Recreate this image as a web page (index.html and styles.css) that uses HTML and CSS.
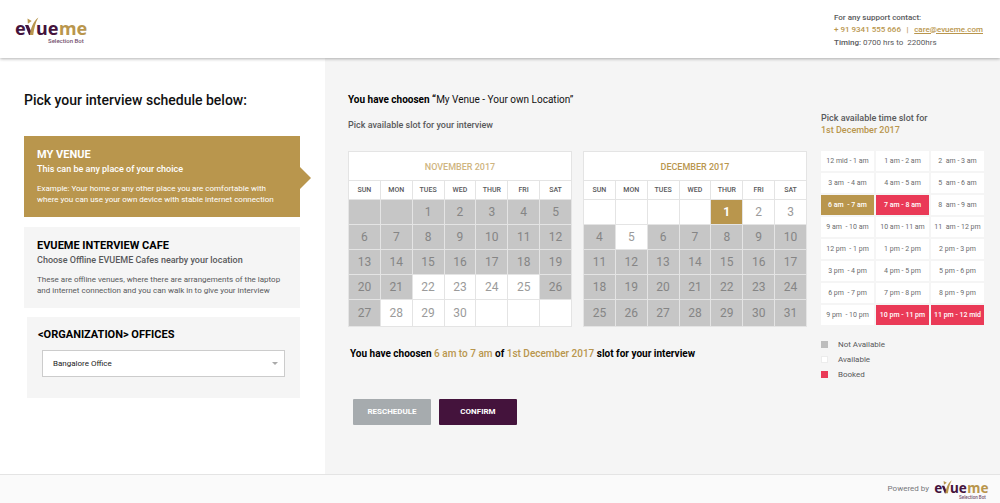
FILE: index.html
```html
<!DOCTYPE html>
<html lang="en">
<head>
<meta charset="utf-8">
<meta name="viewport" content="width=device-width, initial-scale=1">
<title>Evueme – Interview schedule</title>
<link rel="stylesheet" href="styles.css">
</head>
<body>
<header class="topbar">
  <svg class="logo" viewBox="0 0 74 28" role="img" aria-label="evueme Selection Bot">
    <text class="logo-word logo-plum" x="0" y="19">e</text>
    <path class="logo-plum" d="M10 9h3.400l3.200 7.500-1 2.500h-1.600z"/>
    <path class="logo-gold" d="M14.800 19c1-7 3.200-13.500 8.600-17.500-3 5-4.200 10.500-5.200 17.500z"/>
    <path class="logo-gold" d="M12.500 2.500l4.200 2.400-3.800 2.800z"/>
    <text class="logo-word logo-plum" x="21" y="19">ue</text>
    <text class="logo-word logo-gold" x="44" y="19">me</text>
    <text class="logo-tag" x="33" y="27">Selection Bot</text>
  </svg>
  <address class="support">
    <strong>For any support contact:</strong>
    <span class="support-line"><span>+ 91 9341 555 666</span><span>|</span><a href="mailto:care@evueme.com">care@evueme.com</a></span>
    <span class="timing"><strong>Timing:</strong> 0700 hrs to&nbsp; 2200hrs</span>
  </address>
</header>

<div class="page">
  <aside class="venues">
    <h1 class="venues-title">Pick your interview schedule below:</h1>
    <section class="venue venue-active">
      <h2 class="venue-name">MY VENUE</h2>
      <p class="venue-lead">This can be any place of your choice</p>
      <p class="venue-text">Example: Your home or any other place you are comfortable with<br>where you can use your own device with stable internet connection</p>
    </section>
    <section class="venue">
      <h2 class="venue-name">EVUEME INTERVIEW CAFE</h2>
      <p class="venue-lead">Choose Offline EVUEME Cafes nearby your location</p>
      <p class="venue-text">These are offline venues, where there are arrangements of the laptop<br>and internet connection and you can walk in to give your interview</p>
    </section>
    <section class="venue venue-office">
      <h2 class="venue-name"><label for="office">&lt;ORGANIZATION&gt; OFFICES</label></h2>
      <div class="select-wrap">
        <select id="office" class="office-select"><option>Bangalore Office</option></select>
      </div>
    </section>
  </aside>

  <main class="schedule">
    <div class="dates">
      <h2 class="chosen-venue"><strong>You have choosen “</strong>My Venue - Your own Location”</h2>
      <p class="hint">Pick available slot for your interview</p>
      <div class="calendars">
        <table class="calendar">
          <caption class="month month-muted">NOVEMBER 2017</caption>
          <thead><tr><th>SUN</th><th>MON</th><th>TUES</th><th>WED</th><th>THUR</th><th>FRI</th><th>SAT</th></tr></thead>
          <tbody>
            <tr><td class="off"></td><td class="off"></td><td class="off">1</td><td class="off">2</td><td class="off">3</td><td class="off">4</td><td class="off">5</td></tr>
            <tr><td class="off">6</td><td class="off">7</td><td class="off">8</td><td class="off">9</td><td class="off">10</td><td class="off">11</td><td class="off">12</td></tr>
            <tr><td class="off">13</td><td class="off">14</td><td class="off">15</td><td class="off">16</td><td class="off">17</td><td class="off">18</td><td class="off">19</td></tr>
            <tr><td class="off">20</td><td class="off">21</td><td><button class="day">22</button></td><td><button class="day">23</button></td><td><button class="day">24</button></td><td><button class="day">25</button></td><td class="off">26</td></tr>
            <tr><td class="off">27</td><td><button class="day">28</button></td><td><button class="day">29</button></td><td><button class="day">30</button></td><td></td><td></td><td></td></tr>
          </tbody>
        </table>
        <table class="calendar">
          <caption class="month">DECEMBER 2017</caption>
          <thead><tr><th>SUN</th><th>MON</th><th>TUES</th><th>WED</th><th>THUR</th><th>FRI</th><th>SAT</th></tr></thead>
          <tbody>
            <tr><td></td><td></td><td></td><td></td><td class="picked"><button class="day" aria-pressed="true">1</button></td><td><button class="day">2</button></td><td><button class="day">3</button></td></tr>
            <tr><td class="off">4</td><td><button class="day">5</button></td><td class="off">6</td><td class="off">7</td><td class="off">8</td><td class="off">9</td><td class="off">10</td></tr>
            <tr><td class="off">11</td><td class="off">12</td><td class="off">13</td><td class="off">14</td><td class="off">15</td><td class="off">16</td><td class="off">17</td></tr>
            <tr><td class="off">18</td><td class="off">19</td><td class="off">20</td><td class="off">21</td><td class="off">22</td><td class="off">23</td><td class="off">24</td></tr>
            <tr><td class="off">25</td><td class="off">26</td><td class="off">27</td><td class="off">28</td><td class="off">29</td><td class="off">30</td><td class="off">31</td></tr>
          </tbody>
        </table>
      </div>
      <p class="summary">You have choosen <span class="accent">6 am to 7 am</span> of <span class="accent">1st December 2017</span> slot for your interview</p>
      <div class="actions">
        <button class="action action-muted">RESCHEDULE</button>
        <button class="action">CONFIRM</button>
      </div>
    </div>

    <section class="times">
      <h2 class="times-title">Pick available time slot for <span class="accent">1st December 2017</span></h2>
      <div class="slots">
        <button class="slot">12 mid - 1 am</button><button class="slot">1 am - 2 am</button><button class="slot">2&nbsp; am - 3 am</button>
        <button class="slot">3 am&nbsp; - 4 am</button><button class="slot">4 am - 5 am</button><button class="slot">5&nbsp; am - 6 am</button>
        <button class="slot slot-picked">6 am&nbsp; - 7 am</button><button class="slot slot-booked">7 am - 8 am</button><button class="slot">8&nbsp; am - 9 am</button>
        <button class="slot">9 am&nbsp; - 10 am</button><button class="slot">10 am - 11 am</button><button class="slot">11&nbsp; am - 12 pm</button>
        <button class="slot">12 pm&nbsp; - 1 pm</button><button class="slot">1 pm - 2 pm</button><button class="slot">2 pm - 3 pm</button>
        <button class="slot">3 pm&nbsp; - 4 pm</button><button class="slot">4 pm - 5 pm</button><button class="slot">5 pm - 6 pm</button>
        <button class="slot">6 pm&nbsp; - 7 pm</button><button class="slot">7 pm - 8 pm</button><button class="slot">8 pm - 9 pm</button>
        <button class="slot">9 pm&nbsp; - 10 pm</button><button class="slot slot-booked">10 pm - 11 pm</button><button class="slot slot-booked">11 pm - 12 mid</button>
      </div>
      <ul class="legend">
        <li class="legend-item legend-off">Not Available</li>
        <li class="legend-item">Available</li>
        <li class="legend-item legend-booked">Booked</li>
      </ul>
    </section>
  </main>
</div>

<footer class="footer">
  <span>Powered by</span>
  <svg class="logo logo-small" viewBox="0 0 74 28" role="img" aria-label="evueme Selection Bot">
    <text class="logo-word logo-plum" x="0" y="19">e</text>
    <path class="logo-plum" d="M10 9h3.400l3.200 7.500-1 2.500h-1.600z"/>
    <path class="logo-gold" d="M14.800 19c1-7 3.200-13.500 8.600-17.500-3 5-4.200 10.500-5.200 17.500z"/>
    <path class="logo-gold" d="M12.500 2.500l4.200 2.400-3.800 2.800z"/>
    <text class="logo-word logo-plum" x="21" y="19">ue</text>
    <text class="logo-word logo-gold" x="44" y="19">me</text>
    <text class="logo-tag" x="33" y="27">Selection Bot</text>
  </svg>
</footer>
</body>
</html>
```
FILE: styles.css
```css
:root {
  --gold: #b9964d;
  --plum: #44133c;
  --red: #ea3a57;
  --grey: #c6c6c6;
  --panel: #f5f5f5;
  --line: #e4e4e4;
  --text: #58595b;
}

* { box-sizing: border-box; }

body {
  margin: 0;
  min-height: 100vh;
  display: flex;
  flex-direction: column;
  background: #fff;
  color: var(--text);
  font: 8px/12px Roboto, "Liberation Sans", sans-serif;
}

h1, h2, p, ul { margin: 0; padding: 0; }

button, select { font: inherit; color: inherit; border: 0; padding: 0; cursor: pointer; }

strong { font-weight: 500; }

.accent { color: var(--gold); }

/* Header */
.topbar {
  display: flex;
  justify-content: space-between;
  align-items: flex-start;
  padding: 12px 17px 9px 15px;
  min-height: 58px;
  background: #fff;
  box-shadow: 0 1px 3px rgba(0, 0, 0, .3);
  position: relative;
}

.logo { width: 74px; height: 28px; margin-top: 4px; overflow: visible; }
.logo-word { font: 700 18px "Noto Sans", sans-serif; }
.logo-plum { fill: var(--plum); }
.logo-gold { fill: var(--gold); }
.logo-tag { font: 500 6px Roboto, sans-serif; fill: #74506d; }

.support {
  display: flex;
  flex-direction: column;
  width: 149px;
  font-style: normal;
  line-height: 12px;
}
.support-line { display: flex; justify-content: space-between; color: var(--gold); font-weight: 500; }
.support-line a { color: inherit; }
.timing { margin-top: 1px; }

/* Page columns */
.page { flex: 1; display: flex; }

.venues {
  flex: 0 0 325px;
  padding: 34px 25px 24px 24px;
}
.venues-title { font-size: 14px; line-height: 16px; font-weight: 500; color: #111; margin-bottom: 28px; }

.venue {
  position: relative;
  min-height: 81px;
  margin-bottom: 9px;
  padding: 12px 13px 11px;
  background: var(--panel);
}
.venue-name { font-size: 11px; line-height: 14px; font-weight: 700; color: #000; }
.venue-lead { font-size: 9px; line-height: 14px; font-weight: 500; }
.venue-text { margin-top: 7px; line-height: 11px; white-space: nowrap; }

.venue-active { margin-bottom: 10px; background: var(--gold); color: #fff; }
.venue-active .venue-name { color: #fff; }
.venue-active::after {
  content: "";
  position: absolute;
  left: 100%;
  top: 31px;
  border: 11px solid transparent;
  border-left-color: var(--gold);
  border-right: 0;
}

.venue-office { margin-left: 3px; padding: 11px; }
.select-wrap { position: relative; margin: 8px 4px 0; }
.select-wrap::after {
  content: "";
  position: absolute;
  right: 7px;
  top: 12px;
  border: 3px solid transparent;
  border-top-color: #aaa;
  border-bottom: 0;
  pointer-events: none;
}
.office-select {
  appearance: none;
  display: block;
  width: 100%;
  height: 27px;
  padding: 0 10px;
  border: 1px solid #ccc;
  background: #fff;
  color: #222;
}

.schedule {
  flex: 1;
  display: grid;
  grid-template-columns: 1fr 163px;
  gap: 14px;
  align-items: start;
  padding: 34px 16px 24px 23px;
  background: var(--panel);
}
.chosen-venue { font-size: 10px; line-height: 16px; font-weight: 400; color: #111; }
.chosen-venue strong { font-weight: 700; color: #000; }
.hint { margin-top: 10px; font-size: 9px; line-height: 14px; font-weight: 500; }

/* Calendars */
.calendars { display: grid; grid-template-columns: 1fr 1fr; gap: 11px; margin-top: 19px; }
.calendar {
  width: 100%;
  table-layout: fixed;
  border-collapse: collapse;
  background: #fff;
  text-align: center;
}
.month {
  height: 29px;
  line-height: 30px;
  font-size: 9px;
  font-weight: 500;
  color: var(--gold);
  background: #fff;
  border: 1px solid var(--line);
  border-bottom: 0;
}
.month-muted { color: #cfb57f; }
.calendar th, .calendar td { border: 1px solid var(--line); padding: 0; }
.calendar th { height: 19px; font-size: 7px; line-height: 12px; font-weight: 500; }
.calendar td { height: 25px; font-size: 12px; line-height: 16px; color: #9b9b9b; }
.calendar tr:last-child td { height: 27px; }
.calendar .off { background: var(--grey); color: #858585; }
.calendar .picked { background: var(--gold); color: #fff; font-weight: 700; }
.day { display: block; width: 100%; background: none; }

.summary { margin-top: 20px; padding-left: 2px; font-size: 10px; line-height: 14px; font-weight: 700; color: #000; }
.summary .accent { font-weight: 500; }

.actions { display: flex; gap: 8px; margin-top: 38px; padding-left: 5px; }
.action {
  width: 78px;
  height: 26px;
  border-radius: 1px;
  background: var(--plum);
  color: #fff;
  font-weight: 700;
}
.action-muted { background: #a6abae; }

/* Time slots */
.times { padding-top: 20px; }
.times-title { font-size: 9px; line-height: 12px; font-weight: 500; }
.times-title .accent { display: block; }
.slots { display: grid; grid-template-columns: repeat(3, 1fr); gap: 2px; margin-top: 15px; }
.slot { height: 20px; background: #fff; color: #6b6c6e; font-size: 7px; white-space: nowrap; }
.slot-picked { background: var(--gold); color: #fff; font-weight: 500; }
.slot-booked { background: var(--red); color: #fff; font-weight: 500; }

.legend { list-style: none; margin-top: 12px; }
.legend-item { display: flex; align-items: center; gap: 10px; line-height: 15px; }
.legend-item::before { content: ""; width: 7px; height: 7px; background: #fff; outline: 1px solid #ececec; outline-offset: -1px; }
.legend-off::before { background: #bdbdbd; outline: 0; }
.legend-booked::before { background: var(--red); outline: 0; }

/* Footer */
.footer {
  display: flex;
  justify-content: flex-end;
  align-items: center;
  gap: 5px;
  min-height: 29px;
  padding: 0 10px;
  border-top: 1px solid var(--line);
  background: #fafafa;
  color: #77787a;
}
.logo-small { width: 56px; height: 21px; margin-top: 0; }
```
